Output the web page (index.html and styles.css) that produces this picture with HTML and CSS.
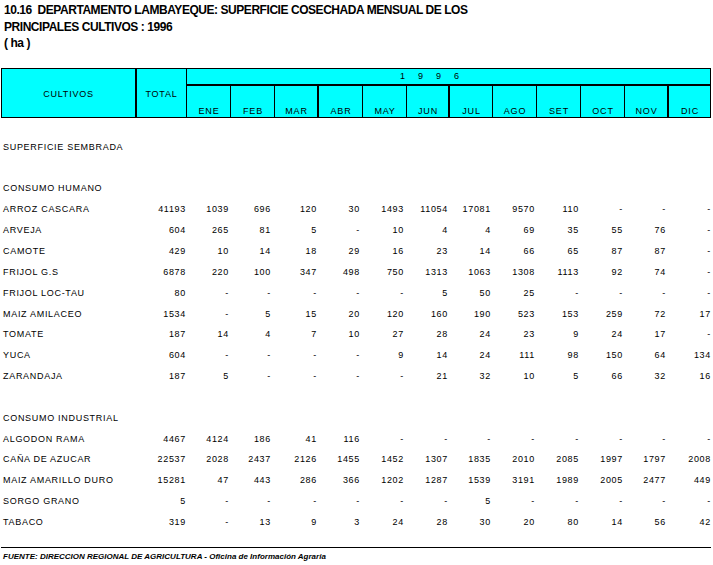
FILE: index.html
```html
<!DOCTYPE html>
<html lang="es">
<head>
<meta charset="utf-8">
<title>10.16 Departamento Lambayeque</title>
<link rel="stylesheet" href="styles.css">
</head>
<body>
<div class="page">
  <div class="title">
    <div>10.16&nbsp; DEPARTAMENTO LAMBAYEQUE: SUPERFICIE COSECHADA MENSUAL DE LOS</div>
    <div>PRINCIPALES CULTIVOS : 1996</div>
    <div>( ha )</div>
  </div>

  <div class="head">
    <div class="h-cult">CULTIVOS</div>
    <div class="h-total">TOTAL</div>
    <div class="h-year">1996</div>
    <div class="m">ENE</div>
    <div class="m">FEB</div>
    <div class="m">MAR</div>
    <div class="m q">ABR</div>
    <div class="m">MAY</div>
    <div class="m">JUN</div>
    <div class="m q">JUL</div>
    <div class="m">AGO</div>
    <div class="m">SET</div>
    <div class="m">OCT</div>
    <div class="m">NOV</div>
    <div class="m q">DIC</div>
  </div>

  <div class="rows">
    <div class="spacer"></div>
    <div class="row"><span>SUPERFICIE SEMBRADA</span></div>
    <div class="row"></div>
    <div class="row"><span>CONSUMO HUMANO</span></div>
    <div class="row"><span>ARROZ CASCARA</span><span>41193</span><span>1039</span><span>696</span><span>120</span><span>30</span><span>1493</span><span>11054</span><span>17081</span><span>9570</span><span>110</span><span>-</span><span>-</span><span>-</span></div>
    <div class="row"><span>ARVEJA</span><span>604</span><span>265</span><span>81</span><span>5</span><span>-</span><span>10</span><span>4</span><span>4</span><span>69</span><span>35</span><span>55</span><span>76</span><span>-</span></div>
    <div class="row"><span>CAMOTE</span><span>429</span><span>10</span><span>14</span><span>18</span><span>29</span><span>16</span><span>23</span><span>14</span><span>66</span><span>65</span><span>87</span><span>87</span><span>-</span></div>
    <div class="row"><span>FRIJOL G.S</span><span>6878</span><span>220</span><span>100</span><span>347</span><span>498</span><span>750</span><span>1313</span><span>1063</span><span>1308</span><span>1113</span><span>92</span><span>74</span><span>-</span></div>
    <div class="row"><span>FRIJOL LOC-TAU</span><span>80</span><span>-</span><span>-</span><span>-</span><span>-</span><span>-</span><span>5</span><span>50</span><span>25</span><span>-</span><span>-</span><span>-</span><span>-</span></div>
    <div class="row"><span>MAIZ AMILACEO</span><span>1534</span><span>-</span><span>5</span><span>15</span><span>20</span><span>120</span><span>160</span><span>190</span><span>523</span><span>153</span><span>259</span><span>72</span><span>17</span></div>
    <div class="row"><span>TOMATE</span><span>187</span><span>14</span><span>4</span><span>7</span><span>10</span><span>27</span><span>28</span><span>24</span><span>23</span><span>9</span><span>24</span><span>17</span><span>-</span></div>
    <div class="row"><span>YUCA</span><span>604</span><span>-</span><span>-</span><span>-</span><span>-</span><span>9</span><span>14</span><span>24</span><span>111</span><span>98</span><span>150</span><span>64</span><span>134</span></div>
    <div class="row"><span>ZARANDAJA</span><span>187</span><span>5</span><span>-</span><span>-</span><span>-</span><span>-</span><span>21</span><span>32</span><span>10</span><span>5</span><span>66</span><span>32</span><span>16</span></div>
    <div class="row"></div>
    <div class="row"><span>CONSUMO INDUSTRIAL</span></div>
    <div class="row"><span>ALGODON RAMA</span><span>4467</span><span>4124</span><span>186</span><span>41</span><span>116</span><span>-</span><span>-</span><span>-</span><span>-</span><span>-</span><span>-</span><span>-</span><span>-</span></div>
    <div class="row"><span>CAÑA DE AZUCAR</span><span>22537</span><span>2028</span><span>2437</span><span>2126</span><span>1455</span><span>1452</span><span>1307</span><span>1835</span><span>2010</span><span>2085</span><span>1997</span><span>1797</span><span>2008</span></div>
    <div class="row"><span>MAIZ AMARILLO DURO</span><span>15281</span><span>47</span><span>443</span><span>286</span><span>366</span><span>1202</span><span>1287</span><span>1539</span><span>3191</span><span>1989</span><span>2005</span><span>2477</span><span>449</span></div>
    <div class="row"><span>SORGO GRANO</span><span>5</span><span>-</span><span>-</span><span>-</span><span>-</span><span>-</span><span>-</span><span>5</span><span>-</span><span>-</span><span>-</span><span>-</span><span>-</span></div>
    <div class="row"><span>TABACO</span><span>319</span><span>-</span><span>13</span><span>9</span><span>3</span><span>24</span><span>28</span><span>30</span><span>20</span><span>80</span><span>14</span><span>56</span><span>42</span></div>
  </div>

  <div class="foot">FUENTE: DIRECCION REGIONAL DE AGRICULTURA - Oficina de Información Agraria</div>
</div>
</body>
</html>
```

FILE: styles.css
```css
html, body {
  margin: 0;
  padding: 0;
  background: #ffffff;
  color: #000000;
  font-family: "Liberation Sans", Arial, sans-serif;
}

.page {
  width: 713px;
}

.title {
  padding: 2px 0 0 4px;
  font-size: 12px;
  font-weight: bold;
  line-height: 16.5px;
  letter-spacing: -0.45px;
  white-space: nowrap;
}

.head {
  margin: 16.5px 0 0 1px;
  width: 710px;
  box-sizing: border-box;
  border: 1px solid #000;
  background: #00ffff;
  display: grid;
  grid-template-columns: 133px 51px 44px 44px 43px 45px 44px 42px 44px 44px 44px 44px 43px 43px;
  grid-template-rows: 17px 31px;
  font-size: 9px;
  letter-spacing: 0.8px;
}

.h-cult {
  grid-column: 1;
  grid-row: 1 / 3;
  display: flex;
  align-items: center;
  justify-content: center;
  padding-top: 1px;
}

.h-total {
  grid-column: 2;
  grid-row: 1 / 3;
  border-left: 2px solid #000;
  display: flex;
  align-items: center;
  justify-content: center;
  padding-top: 1px;
}

.h-year {
  grid-column: 3 / 15;
  grid-row: 1;
  border-left: 1px solid #000;
  border-bottom: 2px solid #000;
  padding-left: 213px;
  letter-spacing: 13px;
  line-height: 15px;
}

.m {
  grid-row: 2;
  border-left: 1px solid #000;
  display: flex;
  align-items: flex-end;
  justify-content: center;
  line-height: 11px;
  padding-left: 1px;
}

.m.q {
  border-left-width: 2px;
}

.rows {
  margin-left: 1px;
  width: 710px;
  box-sizing: border-box;
  padding: 0 1px;
  font-size: 9px;
  letter-spacing: 0.7px;
}

.spacer {
  height: 18.8px;
}

.row {
  display: grid;
  grid-template-columns: 133px 51px 44px 44px 43px 45px 44px 42px 44px 44px 44px 44px 43px 43px;
  height: 20.85px;
  line-height: 20.85px;
  text-align: right;
  white-space: nowrap;
}

.row > span:first-child {
  text-align: left;
  padding-left: 1px;
}

.row > span:nth-child(2) { padding-right: 0; }
.row > span:nth-child(3) { padding-right: 1px; }
.row > span:nth-child(4) { padding-right: 3px; }
.row > span:nth-child(5) { padding-right: 0; }
.row > span:nth-child(6) { padding-right: 2px; }
.row > span:nth-child(7) { padding-right: 2px; }
.row > span:nth-child(8) { padding-right: 0; }
.row > span:nth-child(9) { padding-right: 1px; }
.row > span:nth-child(10) { padding-right: 1px; }
.row > span:nth-child(11) { padding-right: 1px; }
.row > span:nth-child(12) { padding-right: 1px; }
.row > span:nth-child(13) { padding-right: 1px; }
.row > span:nth-child(14) { padding-right: 0; margin-right: -1px; }

.foot {
  margin: 14.05px 0 0 1px;
  width: 710px;
  box-sizing: border-box;
  border-top: 1px solid #000;
  padding-left: 2px;
  font-size: 8px;
  font-style: italic;
  font-weight: bold;
  line-height: 17px;
  white-space: nowrap;
}
```
